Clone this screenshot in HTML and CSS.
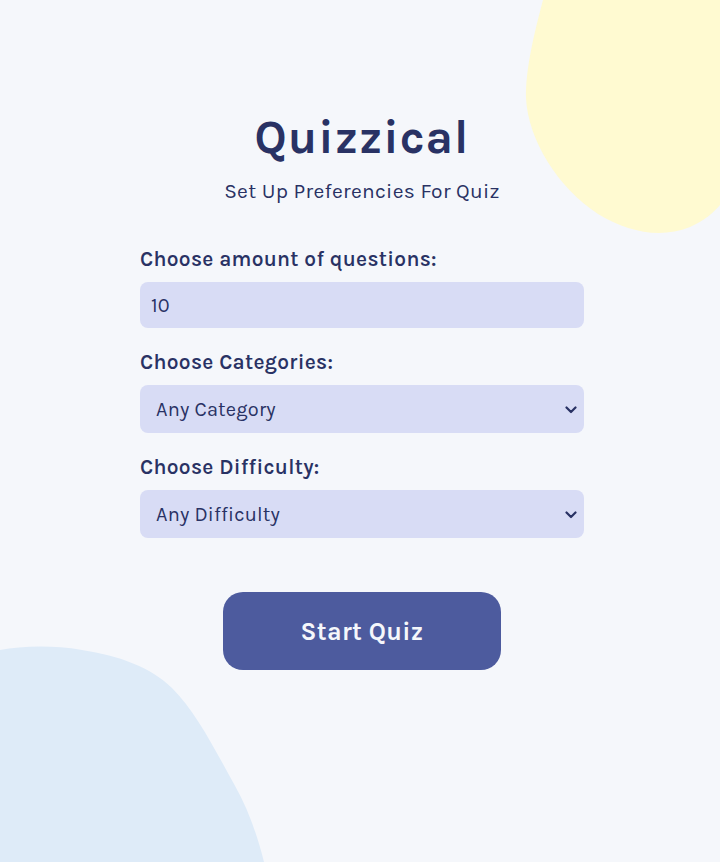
FILE: index.html
```html
<!DOCTYPE html>
<html lang="en">
<head>
<meta charset="utf-8">
<title>Quizzical</title>
<link rel="stylesheet" href="styles.css">
</head>
<body>
<svg class="blob blob-yellow" width="200" height="240" viewBox="520 0 200 240" aria-hidden="true">
  <path d="M543,0 C535,30 525,70 526,98 C528,140 558,188 598,214 C628,232 660,239 690,227 C704,221 714,212 720,205 L720,0 Z" fill="#FFFAD1"/>
</svg>
<svg class="blob blob-blue" width="270" height="220" viewBox="0 642 270 220" aria-hidden="true">
  <path d="M0,650 C22,646 52,645 82,650 C120,656 150,667 172,688 C196,712 214,748 234,784 C249,810 258,838 264,862 L0,862 Z" fill="#DEEBF8"/>
</svg>
<main class="setup">
  <h1 class="title">Quizzical</h1>
  <p class="subtitle">Set Up Preferencies For Quiz</p>
  <form class="form">
    <label class="label" for="amount">Choose amount of questions:</label>
    <input class="field field-input" id="amount" type="number" value="10">
    <label class="label" for="category">Choose Categories:</label>
    <div class="select-wrap">
      <select class="field field-select" id="category">
        <option>Any Category</option>
      </select>
      <svg class="chevron" width="12" height="8" viewBox="0 0 12 8" aria-hidden="true"><path d="M1.5 1.5 L6 6 L10.5 1.5" fill="none" stroke="#293264" stroke-width="2.2" stroke-linecap="round" stroke-linejoin="round"/></svg>
    </div>
    <label class="label" for="difficulty">Choose Difficulty:</label>
    <div class="select-wrap">
      <select class="field field-select" id="difficulty">
        <option>Any Difficulty</option>
      </select>
      <svg class="chevron" width="12" height="8" viewBox="0 0 12 8" aria-hidden="true"><path d="M1.5 1.5 L6 6 L10.5 1.5" fill="none" stroke="#293264" stroke-width="2.2" stroke-linecap="round" stroke-linejoin="round"/></svg>
    </div>
  </form>
  <button class="start" type="button">Start Quiz</button>
</main>
</body>
</html>
```
FILE: styles.css
```css
* { box-sizing: border-box; }
html, body { margin: 0; padding: 0; }
body {
  background: #F5F7FB;
  color: #293264;
  font-family: "Karla", "Open Sans", "Liberation Sans", sans-serif;
  width: 720px;
  height: 862px;
  overflow: hidden;
  position: relative;
}
.blob { position: absolute; }
.blob-yellow { top: 0; right: 0; }
.blob-blue { left: 0; bottom: 0; }
.setup {
  position: relative;
  width: 444px;
  margin-left: 140px;
  padding-top: 108px;
  display: flex;
  flex-direction: column;
  align-items: center;
}
.title {
  margin: 0;
  font-size: 47px;
  font-weight: 700;
  letter-spacing: 1px;
  line-height: 60px;
}
.subtitle {
  margin: 11px 0 0;
  font-size: 21px;
  line-height: 24px;
  letter-spacing: 0.3px;
}
.form {
  width: 100%;
  margin-top: 44px;
  display: flex;
  flex-direction: column;
}
.label {
  font-size: 21px;
  font-weight: 600;
  line-height: 24px;
  letter-spacing: 0.3px;
  margin-bottom: 11px;
}
.field {
  display: block;
  width: 100%;
  border: none;
  background: #D8DCF5;
  color: #293264;
  font-family: inherit;
  font-size: 20px;
  letter-spacing: 0.2px;
  border-radius: 8px;
  outline: none;
  margin: 0 0 22px;
}
.field-input {
  height: 46px;
  padding: 0 11px;
  -moz-appearance: textfield;
}
.field-input::-webkit-inner-spin-button,
.field-input::-webkit-outer-spin-button { -webkit-appearance: none; margin: 0; }
.select-wrap { position: relative; }
.field-select {
  height: 48px;
  padding: 0 30px 0 16px;
  -webkit-appearance: none;
  appearance: none;
}
.chevron {
  position: absolute;
  right: 7px;
  top: 21px;
  pointer-events: none;
}
.start {
  margin-top: 32px;
  width: 278px;
  height: 78px;
  border: none;
  border-radius: 20px;
  background: #4D5B9E;
  color: #F5F7FB;
  font-family: inherit;
  font-size: 25px;
  font-weight: 700;
  letter-spacing: 0.3px;
}
```
